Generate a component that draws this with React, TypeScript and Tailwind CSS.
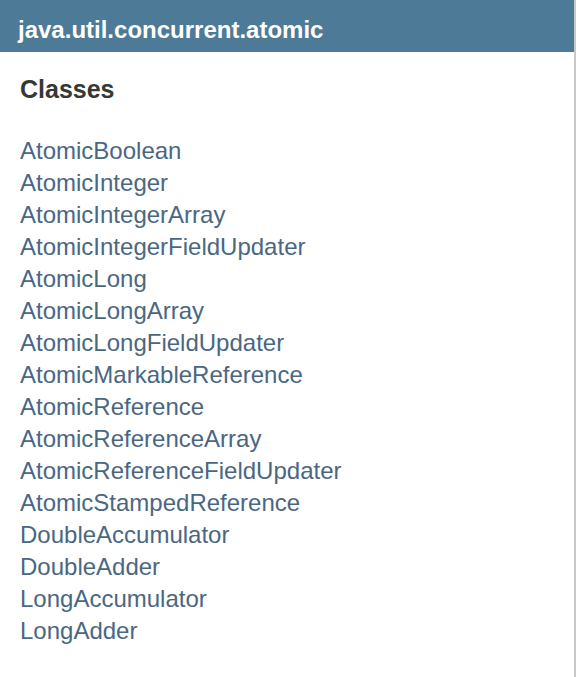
import React from "react";

const classes = [
  "AtomicBoolean",
  "AtomicInteger",
  "AtomicIntegerArray",
  "AtomicIntegerFieldUpdater",
  "AtomicLong",
  "AtomicLongArray",
  "AtomicLongFieldUpdater",
  "AtomicMarkableReference",
  "AtomicReference",
  "AtomicReferenceArray",
  "AtomicReferenceFieldUpdater",
  "AtomicStampedReference",
  "DoubleAccumulator",
  "DoubleAdder",
  "LongAccumulator",
  "LongAdder",
];

export default function App() {
  return (
    <div className="w-[578px] h-[677px] bg-white overflow-hidden" style={{ fontFamily: '"Liberation Sans", Arial, sans-serif' }}>
      <div className="w-[576px] h-[677px] border-r-2 border-[#c8c8c8] bg-white">
        <div className="h-[52px] bg-[#4d7a97] pt-[8px] pl-[18px]">
          <div className="text-[24px] leading-[44px] font-bold text-white">java.util.concurrent.atomic</div>
        </div>
        <div className="pl-[20px] pt-[21px]">
          <h2 className="text-[25px] leading-[32px] font-bold text-[#353833]">Classes</h2>
          <ul className="mt-[30px] flex flex-col">
            {classes.map((c) => (
              <li key={c} className="text-[24px] leading-[32px] text-[#4a6782]">
                <a href="#">{c}</a>
              </li>
            ))}
          </ul>
        </div>
      </div>
    </div>
  );
}
